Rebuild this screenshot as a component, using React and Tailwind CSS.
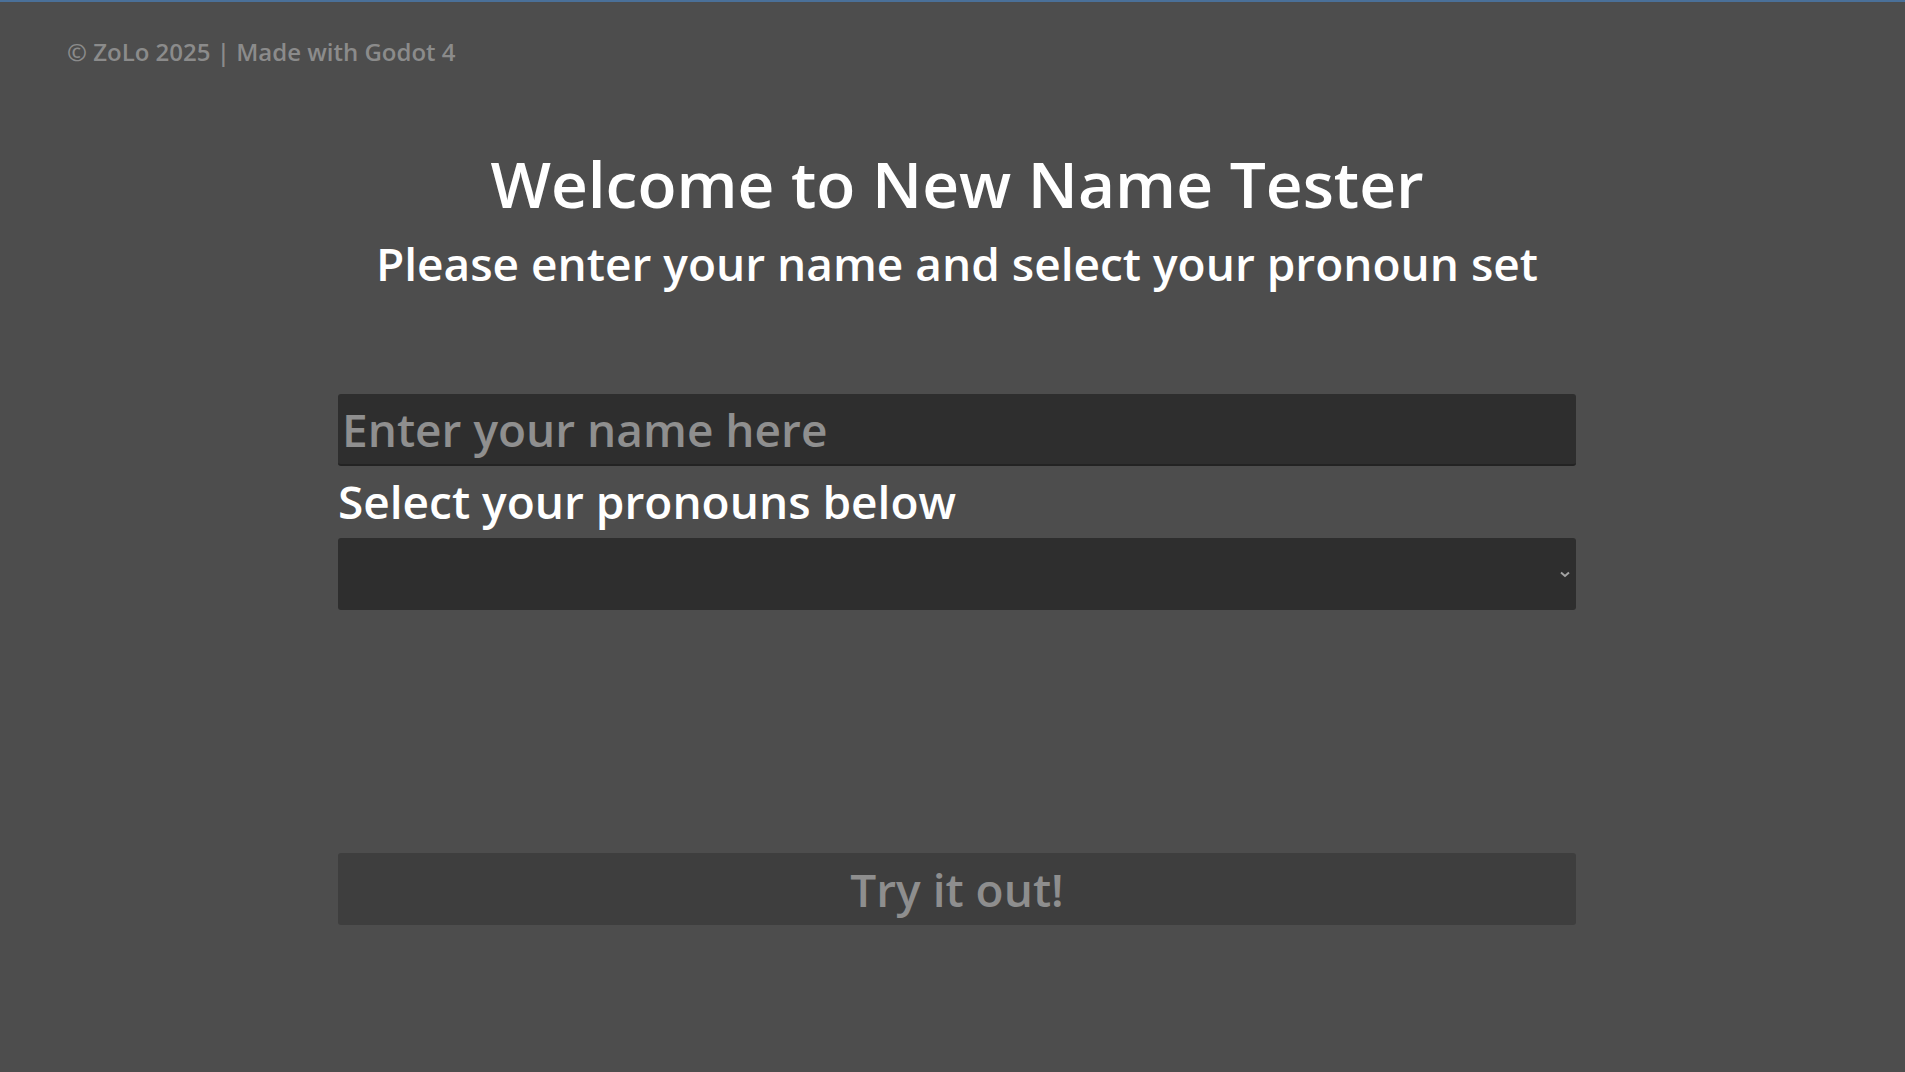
const App = () => {
  return (
    <div
      className="min-h-screen bg-[#4d4d4d] border-t-2 border-[#4a7099] font-semibold"
      style={{ fontFamily: '"Open Sans", "Noto Sans", sans-serif' }}
    >
      <p className="pl-[67px] pt-[38px] text-[24px] leading-none text-[#8b8b8b]">
        © ZoLo 2025 | Made with Godot 4
      </p>

      <div className="w-[1238px] ml-[338px]">
        <h1 className="mt-[88px] text-center text-[64px] leading-none text-white">
          Welcome to New Name Tester
        </h1>
        <h2 className="mt-[24px] text-center text-[46px] leading-none text-white">
          Please enter your name and select your pronoun set
        </h2>

        {/* name field */}
        <input
          type="text"
          placeholder="Enter your name here"
          className="mt-[108px] block w-full h-[72px] px-[4px] rounded-[3px] bg-[#2e2e2e] border-b-2 border-[#232323] text-[46px] leading-none text-white placeholder:text-[#8f8f8f] outline-none"
        />

        <p className="mt-[12px] text-[46px] leading-none text-white">Select your pronouns below</p>

        {/* pronoun dropdown */}
        <div className="mt-[14px] h-[72px] rounded-[3px] bg-[#2e2e2e] flex items-center justify-end pr-[6px]">
          <svg width="10" height="7" viewBox="0 0 10 7" fill="none">
            <polyline points="1,1.5 5,5 9,1.5" stroke="#a3a3a3" strokeWidth="2" />
          </svg>
        </div>

        <button
          disabled
          className="mt-[243px] w-full h-[72px] rounded-[3px] bg-[#3e3e3e] text-[46px] leading-none text-[#8e8e8e] flex items-center justify-center"
        >
          Try it out!
        </button>
      </div>
    </div>
  );
};

export default App;
